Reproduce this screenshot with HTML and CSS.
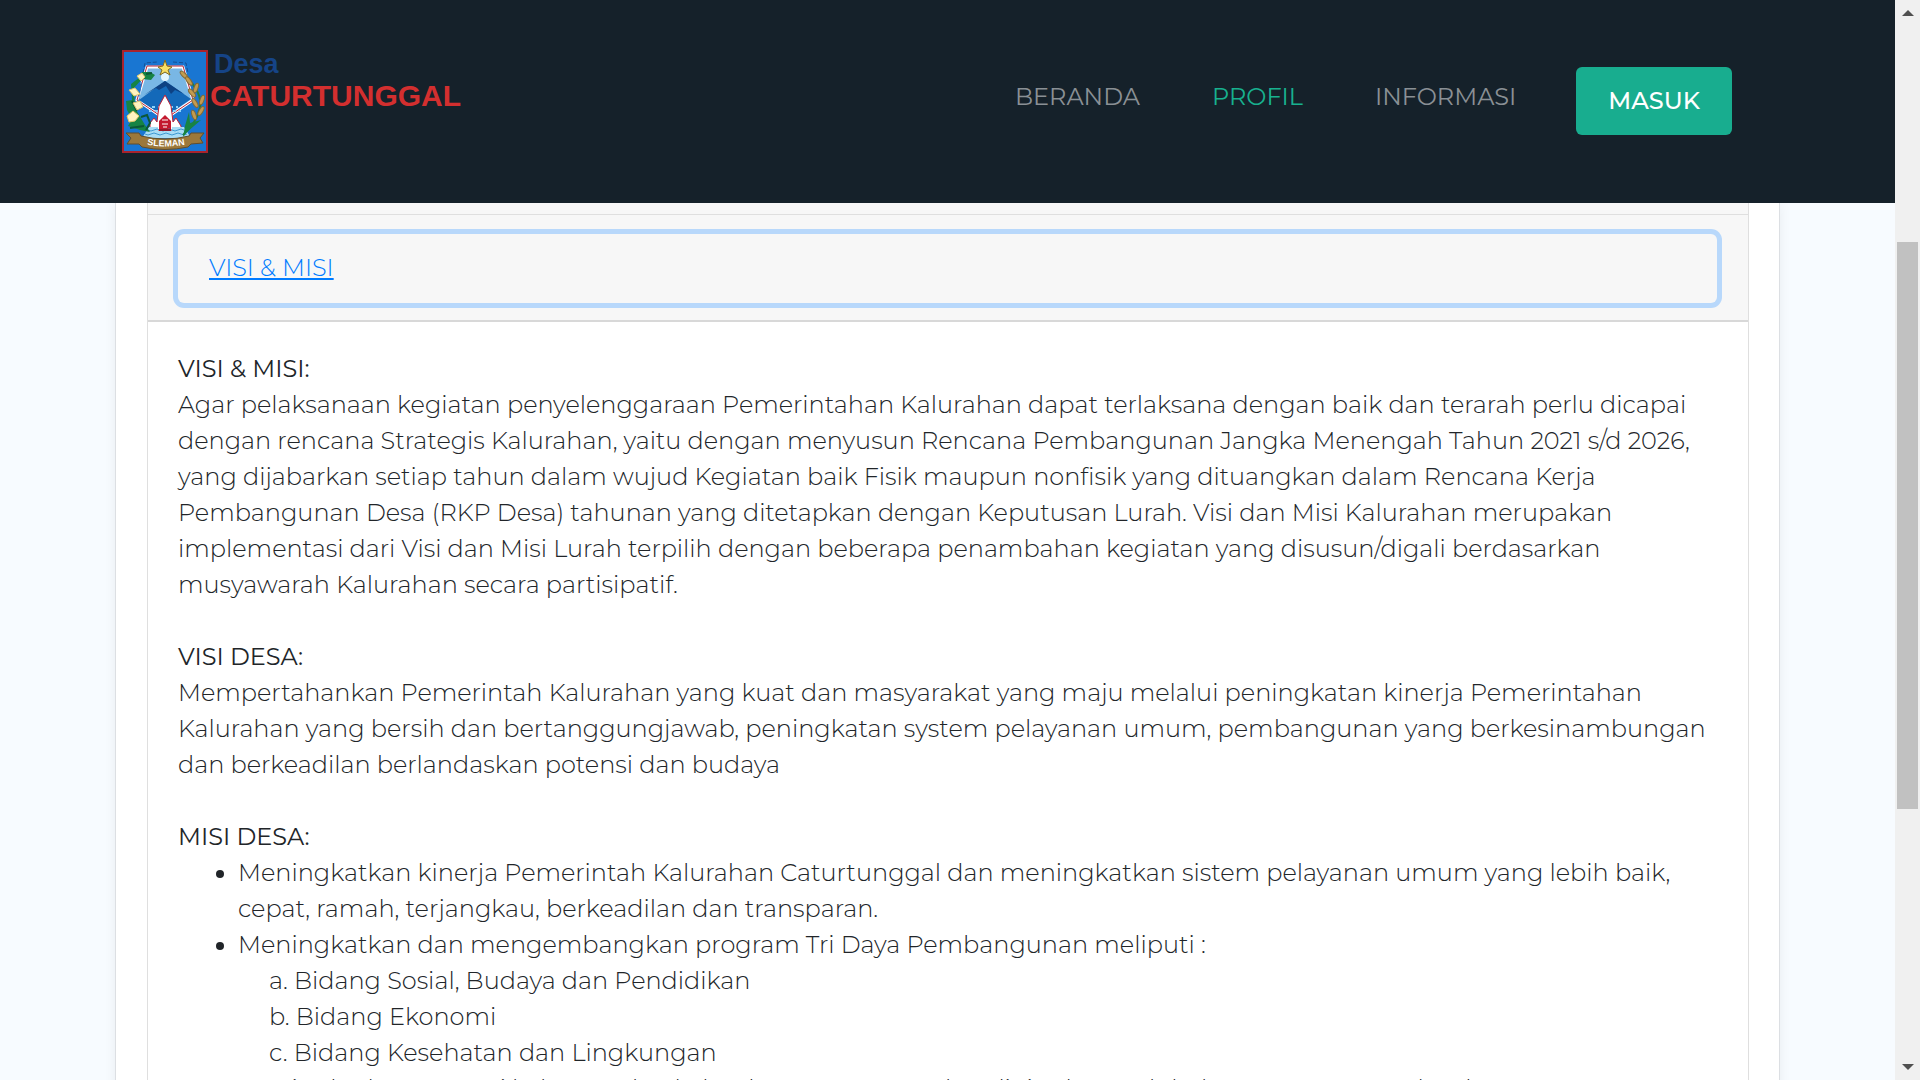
FILE: index.html
```html
<!DOCTYPE html>
<html lang="id">
<head>
<meta charset="utf-8">
<meta name="viewport" content="width=device-width, initial-scale=1">
<title>Profil - Desa Caturtunggal</title>
<link rel="stylesheet" href="styles.css">
</head>
<body>
<div class="page">
  <header class="navbar">
    <a class="brand" href="#" aria-label="Desa Caturtunggal">
      <svg class="crest" viewBox="0 0 86 103" aria-hidden="true">
        <rect x="1" y="1" width="84" height="101" fill="#1976d2" stroke="#a8232e" stroke-width="2"/>
        <path d="M21 23 23 13 35 12M51 12 64 13 66 23" fill="none" stroke="#174f94" stroke-width="1" stroke-dasharray="4 2"/>
        <path d="M25 17H61L71 50 43 69 15 50Z" fill="#79b7e5" stroke="#fff" stroke-width="3"/>
        <path d="M25 16H61L71 50 43 69 15 50Z" fill="none" stroke="#b8253b" stroke-width="1"/>
        <path d="M17 50 43 31 69 49 43 67Z" fill="#1469b9"/>
        <path d="M22 45 43 31 62 44 53 40 49 44 44 36 37 40 34 38Z" fill="#0d4183"/>
        <circle cx="43" cy="27" r="4" fill="#e4f6ff"/>
        <path d="M43 10 45 16 50 17 46 20 48 25 43 22 38 25 40 20 36 17 41 16Z" fill="#f7df66" stroke="#866b20" stroke-width="1"/>
        <path d="M30 57 56 57M27 61 59 61" stroke="#8ed3fa" stroke-width="2" stroke-dasharray="3 3"/>
        <path d="M28 79V73L32 68 35 72 37 56 43 45 49 56 51 72 54 68 59 76V81H28Z" fill="#fff" stroke="#bf2137" stroke-width="1"/>
        <path d="M37 81V71L43 65 49 71V81Z" fill="#c3192f"/>
        <path d="M40 70H46M40 74H46M41 77H45" stroke="#fff" stroke-width="1"/>
        <path d="M27 77H36V81H50V77H62L69 88H20Z" fill="#a9dcf5"/>
        <path d="M26 80q3 2 6 0t6 0 6 0 6 0 6 0 6 0M23 84q3 2 6 0t6 0 6 0 6 0 6 0 6 0 6 0" fill="none" stroke="#3e99d2" stroke-width="1"/>
        <path d="M37 80H49" stroke="#951629" stroke-width="2"/>
        <path d="M28 22 33 25 29 30 20 29 12 38 13 58 23 75 28 82 18 80 6 76 10 69 5 60 4 51 10 50 9 34 18 27 20 22Z" fill="#168344"/>
        <path d="M14 38 20 32 18 44 16 52 21 60Z" fill="#1976d2"/>
        <path d="M19 67 25 65 28 73 24 80M8 78 22 76M24 24 30 23M10 51 15 61" fill="none" stroke="#0b5736" stroke-width="2"/>
        <g fill="#fff4c1" stroke="#e1c66b" stroke-width="1">
          <path d="M15 26 20 23 23 27 19 31Z"/><path d="M7 40 13 38 18 44 12 46Z"/>
          <path d="M11 53 18 51 21 57 15 60Z"/><path d="M5 66 11 61 17 66 13 71 7 72Z"/>
        </g>
        <path d="M62 25Q81 42 78 58 75 72 61 85" fill="none" stroke="#257e3c" stroke-width="2"/>
        <path d="M67 62 68 73 79 70 65 82 61 87 63 76Z" fill="#168344"/>
        <g fill="#c39b4f" stroke="#7e6939" stroke-width="1">
          <ellipse cx="62" cy="25" rx="5" ry="2" transform="rotate(45 62 25)"/>
          <ellipse cx="67" cy="31" rx="5" ry="2" transform="rotate(55 67 31)"/>
          <ellipse cx="74" cy="38" rx="5" ry="2" transform="rotate(110 74 38)"/>
          <ellipse cx="70" cy="43" rx="5" ry="2" transform="rotate(50 70 43)"/>
          <ellipse cx="80" cy="50" rx="5" ry="2" transform="rotate(110 80 50)"/>
          <ellipse cx="73" cy="53" rx="5" ry="2" transform="rotate(60 73 53)"/>
          <ellipse cx="79" cy="61" rx="5" ry="2" transform="rotate(120 79 61)"/>
          <ellipse cx="72" cy="65" rx="5" ry="2" transform="rotate(70 72 65)"/>
        </g>
        <path d="M4 83 17 83 19 86Q43 92 67 86L69 83 82 83 78 88 81 93 69 94 66 97Q43 102 20 97L17 94 5 94 9 88Z" fill="#9c783a" stroke="#624d2b" stroke-width="1"/>
        <path id="ribbon" d="M21 94Q43 99 67 94" fill="none"/>
        <text class="crest-text"><textPath href="#ribbon" startOffset="50%">SLEMAN</textPath></text>
      </svg>
      <span class="brand-name"><span class="brand-top">Desa</span><span class="brand-main">CATURTUNGGAL</span></span>
    </a>
    <nav class="menu">
      <a href="#">BERANDA</a>
      <a class="active" href="#">PROFIL</a>
      <a href="#">INFORMASI</a>
      <button class="login" type="button">MASUK</button>
    </nav>
  </header>
  <main class="content">
    <section class="card">
      <div class="accordion">
        <div class="previous"></div>
        <h2 class="item-head"><button class="toggle" type="button" aria-expanded="true">VISI &amp; MISI</button></h2>
        <div class="item-body">
          <h3>VISI &amp; MISI:</h3>
          <p>Agar pelaksanaan kegiatan penyelenggaraan Pemerintahan Kalurahan dapat terlaksana dengan baik dan terarah perlu dicapai dengan rencana Strategis Kalurahan, yaitu dengan menyusun Rencana Pembangunan Jangka Menengah Tahun 2021 s/d 2026, yang dijabarkan setiap tahun dalam wujud Kegiatan baik Fisik maupun nonfisik yang dituangkan dalam Rencana Kerja Pembangunan Desa (RKP Desa) tahunan yang ditetapkan dengan Keputusan Lurah. Visi dan Misi Kalurahan merupakan implementasi dari Visi dan Misi Lurah terpilih dengan beberapa penambahan kegiatan yang disusun/digali berdasarkan musyawarah Kalurahan secara partisipatif.</p>
          <h3>VISI DESA:</h3>
          <p>Mempertahankan Pemerintah Kalurahan yang kuat dan masyarakat yang maju melalui peningkatan kinerja Pemerintahan Kalurahan yang bersih dan bertanggungjawab, peningkatan system pelayanan umum, pembangunan yang berkesinambungan dan berkeadilan berlandaskan potensi dan budaya</p>
          <h3>MISI DESA:</h3>
          <ul class="missions">
            <li>Meningkatkan kinerja Pemerintah Kalurahan Caturtunggal dan meningkatkan sistem pelayanan umum yang lebih baik, cepat, ramah, terjangkau, berkeadilan dan transparan.</li>
            <li>Meningkatkan dan mengembangkan program Tri Daya Pembangunan meliputi :
              <div class="fields">a. Bidang Sosial, Budaya dan Pendidikan<br>b. Bidang Ekonomi<br>c. Bidang Kesehatan dan Lingkungan</div>
            </li>
            <li>Meningkatkan potensi keluarga dan kelembagaan masyarakat di tingkat padukuhan secara menyeluruh.</li>
          </ul>
        </div>
      </div>
    </section>
  </main>
  <div class="scrollbar" aria-hidden="true">
    <svg class="arrow" viewBox="0 0 12 6"><path d="M0 6 6 0 12 6Z"/></svg>
    <div class="track"><div class="thumb"></div></div>
    <svg class="arrow" viewBox="0 0 12 6"><path d="M0 0H12L6 6Z"/></svg>
  </div>
</div>
</body>
</html>
```
FILE: styles.css
```css
* { box-sizing: border-box; }
body {
  margin: 0;
  font-family: Montserrat, Inter, sans-serif;
  font-size: 24px;
  font-weight: 300;
  line-height: 36px;
  color: #212529;
  background: #f7fbff;
}
.page {
  display: grid;
  grid-template: auto minmax(0, 1fr) / minmax(0, 1fr) 25px;
  height: 100vh;
  overflow: hidden;
}
.navbar {
  display: flex;
  align-items: flex-start;
  justify-content: space-between;
  padding: 50px 163px 50px 122px;
  background: #15212a;
}
.brand {
  display: flex;
  text-decoration: none;
  font-family: "Liberation Sans", Arial, sans-serif;
  font-weight: 700;
}
.crest { width: 86px; height: 103px; }
.crest-text { font: bold 9px "Liberation Sans", Arial, sans-serif; fill: #fff; text-anchor: middle; }
.brand-name { display: flex; flex-direction: column; padding-left: 2px; }
.brand-top { padding-left: 4px; font-size: 27px; line-height: 28px; color: #154487; }
.brand-main { font-size: 30px; line-height: 36px; color: #d32f2f; }
.menu { display: flex; align-items: flex-start; gap: 72px; padding-top: 17px; }
.menu a { padding-top: 12px; color: #8a9095; text-decoration: none; font-weight: 400; }
.menu .active { color: #18b18f; }
.login {
  margin-left: -12px;
  padding: 16px 32px;
  border: 0;
  border-radius: 6px;
  background: #18ad8f;
  color: #fff;
  font: 500 24px/36px Montserrat, Inter, sans-serif;
}
.content { grid-row: 2; padding: 0 115px; overflow: hidden; }
.card {
  padding: 0 30px 0 31px;
  background: #fff;
  border: solid #dcdfe3;
  border-width: 0 1px;
  box-shadow: 0 0 12px rgba(0, 0, 0, .06);
}
.accordion { border: solid #dfdfdf; border-width: 0 1px; }
.previous { height: 11px; background: #f7f7f7; }
.item-head {
  margin: 0;
  padding: 19px 31px 17px 30px;
  border-top: 1px solid #dfdfdf;
  border-bottom: 2px solid #d8d8d8;
  background: #f7f7f7;
}
.toggle {
  display: block;
  width: 100%;
  padding: 16px 32px 17px 31px;
  border: 0;
  border-radius: 6px;
  background: transparent;
  box-shadow: 0 0 0 5px #b8d8fb;
  color: #007bff;
  font: 300 24px/36px Montserrat, Inter, sans-serif;
  text-align: left;
  text-decoration: underline;
}
.item-body { padding: 29px 30px; }
.item-body h3 { margin: 0; font-size: 24px; font-weight: 400; line-height: 36px; }
.item-body p { margin: 0 0 36px; }
.missions { margin: 0; padding-left: 60px; }
.fields { padding-left: 31px; }
.scrollbar {
  grid-area: 1 / 2 / 3 / 3;
  display: flex;
  flex-direction: column;
  align-items: center;
  padding: 10px 0;
  background: #f0f0f0;
}
.arrow { width: 12px; height: 6px; fill: #505050; }
.track { flex: 1; width: 21px; padding-top: 226px; }
.thumb { height: 69%; background: #c1c1c1; }
```
